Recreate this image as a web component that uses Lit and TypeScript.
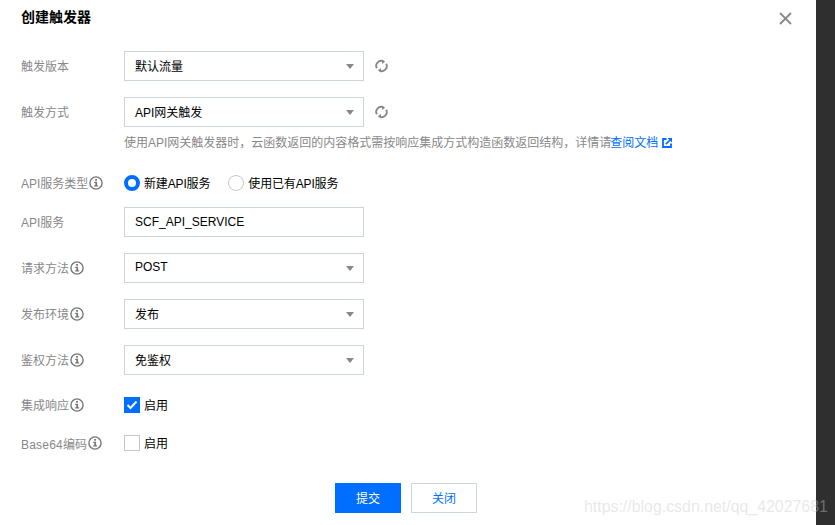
import { LitElement, html, css } from "lit";
import { customElement } from "lit/decorators.js";

const caret = html`<svg class="caret" width="8" height="5" viewBox="0 0 8 5"><path d="M0 0h8L4 5z" fill="#888"/></svg>`;
const refresh = html`<svg class="refresh" width="13" height="14" viewBox="0 0 14 14" fill="none"><path d="M2 9.5A5.4 5.4 0 0 1 8.8 1.9" stroke="#888" stroke-width="2"/><path d="M12 4.5A5.4 5.4 0 0 1 5.2 12.1" stroke="#888" stroke-width="2"/><path d="M7.5 0l3.4 2.4L7.6 4.8z" fill="#888"/><path d="M6.5 14l-3.4-2.4L6.4 9.2z" fill="#888"/></svg>`;
const info = html`<svg class="info" width="14" height="14" viewBox="0 0 14 14"><circle cx="7" cy="7" r="6.1" fill="none" stroke="#777" stroke-width="1.4"/><rect x="6.1" y="3" width="1.9" height="1.7" fill="#777"/><path d="M5.2 5.7h2.9v3.6h1v1.3H5.1V9.3h1.2V7H5.2z" fill="#777"/></svg>`;

@customElement("app-root")
export class AppRoot extends LitElement {
  static styles = css`
    :host { display: block; width: 835px; height: 525px; position: relative; overflow: hidden; background: #2f2f2f;
      font-family: "Liberation Sans", "Noto Sans CJK SC", sans-serif; font-size: 12px; color: #000; }
    .dialog { width: 816px; height: 525px; background: #fff; box-sizing: border-box; padding: 0 0 0 21px; display: flex; flex-direction: column; }
    .head { height: 51px; display: flex; justify-content: space-between; box-sizing: border-box; padding: 9px 24px 0 0; }
    .title { font-size: 14px; font-weight: 700; line-height: 16px; color: #000; }
    .close { margin-top: 3px; }
    .row { display: flex; align-items: center; }
    .t { padding-bottom: 2px; }
    .label { width: 103px; color: #888; display: flex; align-items: center; gap: 1px; white-space: nowrap; }
    .info { flex: none; }
    .field { width: 240px; height: 30px; box-sizing: border-box; border: 1px solid #cfd5de; padding: 0 9px 0 10px; display: flex; align-items: center; justify-content: space-between; }
    .field .plain { padding-bottom: 0; }
    .refresh { margin-left: 11px; }
    .help { margin: 7px 0 0 103px; color: #888; line-height: 18px; display: flex; align-items: center; white-space: nowrap; height: 18px; }
    .help a { color: #006eff; margin-right: 4px; margin-left: -1px; }
    .mt16 { margin-top: 16px; }
    .mt14 { margin-top: 14px; }
    .radio-row { margin-top: 21px; height: 20px; }
    .opt { display: flex; align-items: center; gap: 3px; margin-right: 18px; }
    .opt .t { margin-left: 1px; }
    .radio-row .opt .t { letter-spacing: -.15px; }
    .radio { width: 16px; height: 16px; box-sizing: border-box; border-radius: 50%; border: 1px solid #c6c6c6; }
    .radio.on { border: 4px solid #006eff; }
    .box { width: 16px; height: 16px; box-sizing: border-box; border: 1px solid #c6c6c6; display: flex; align-items: center; justify-content: center; }
    .box.on { background: #006eff; border-color: #006eff; }
    .check-row { height: 20px; }
    .c1 { margin-top: 20px; }
    .c2 { margin-top: 18px; }
    .b64 { letter-spacing: .2px; padding-bottom: 0; }
    .footer { margin: 30px 0 0 314px; display: flex; gap: 10px; }
    .btn { width: 66px; height: 30px; box-sizing: border-box; display: flex; align-items: center; justify-content: center; }
    .primary { background: #006eff; color: #fff; }
    .weak { border: 1px solid #cfd5de; color: #006eff; }
    .mark { position: absolute; left: 584px; top: 498px; font-size: 15.9px; line-height: 18px; color: rgba(200,200,200,.42); white-space: nowrap; }
  `;

  private sel(label: string, value: string) {
    return html`<div class="row mt16"><div class="label"><span class="t">${label}</span>${info}</div><div class="field"><span class="t">${value}</span>${caret}</div></div>`;
  }

  render() {
    return html`
      <div class="dialog">
        <div class="head">
          <div class="title">创建触发器</div>
          <svg class="close" width="13" height="13" viewBox="0 0 13 13"><path d="M1 1l11 11M12 1L1 12" stroke="#888" stroke-width="1.8"/></svg>
        </div>
        <div class="row"><div class="label"><span class="t">触发版本</span></div><div class="field"><span class="t">默认流量</span>${caret}</div>${refresh}</div>
        <div class="row mt16"><div class="label"><span class="t">触发方式</span></div><div class="field"><span class="t">API网关触发</span>${caret}</div>${refresh}</div>
        <div class="help">使用API网关触发器时，云函数返回的内容格式需按响应集成方式构造函数返回结构，详情请<a>查阅文档</a>
          <svg width="10" height="10" viewBox="0 0 10 10" fill="none"><path d="M4.5 1H1v8h8V5.5" stroke="#006eff" stroke-width="1.8"/><path d="M3.8 6.2L8 2" stroke="#006eff" stroke-width="1.7"/><path d="M5.5 0H10v4.5z" fill="#006eff"/></svg>
        </div>
        <div class="row radio-row">
          <div class="label"><span class="t">API服务类型</span>${info}</div>
          <div class="opt"><span class="radio on"></span><span class="t">新建API服务</span></div>
          <div class="opt"><span class="radio"></span><span class="t">使用已有API服务</span></div>
        </div>
        <div class="row mt14"><div class="label"><span class="t">API服务</span></div><div class="field"><span class="plain">SCF_API_SERVICE</span></div></div>
        ${this.sel("请求方法", "POST")}
        ${this.sel("发布环境", "发布")}
        ${this.sel("鉴权方法", "免鉴权")}
        <div class="row check-row c1"><div class="label"><span class="t">集成响应</span>${info}</div>
          <div class="opt"><span class="box on"><svg width="12" height="10" viewBox="0 0 12 10"><path d="M1.5 5l3 3 6-6.5" fill="none" stroke="#fff" stroke-width="2"/></svg></span><span class="t">启用</span></div></div>
        <div class="row check-row c2"><div class="label"><span class="t b64">Base64编码</span>${info}</div>
          <div class="opt"><span class="box"></span><span class="t">启用</span></div></div>
        <div class="footer"><div class="btn primary"><span class="t">提交</span></div><div class="btn weak"><span class="t">关闭</span></div></div>
      </div>
      <div class="mark">https://blog.csdn.net/qq_42027681</div>
    `;
  }
}
